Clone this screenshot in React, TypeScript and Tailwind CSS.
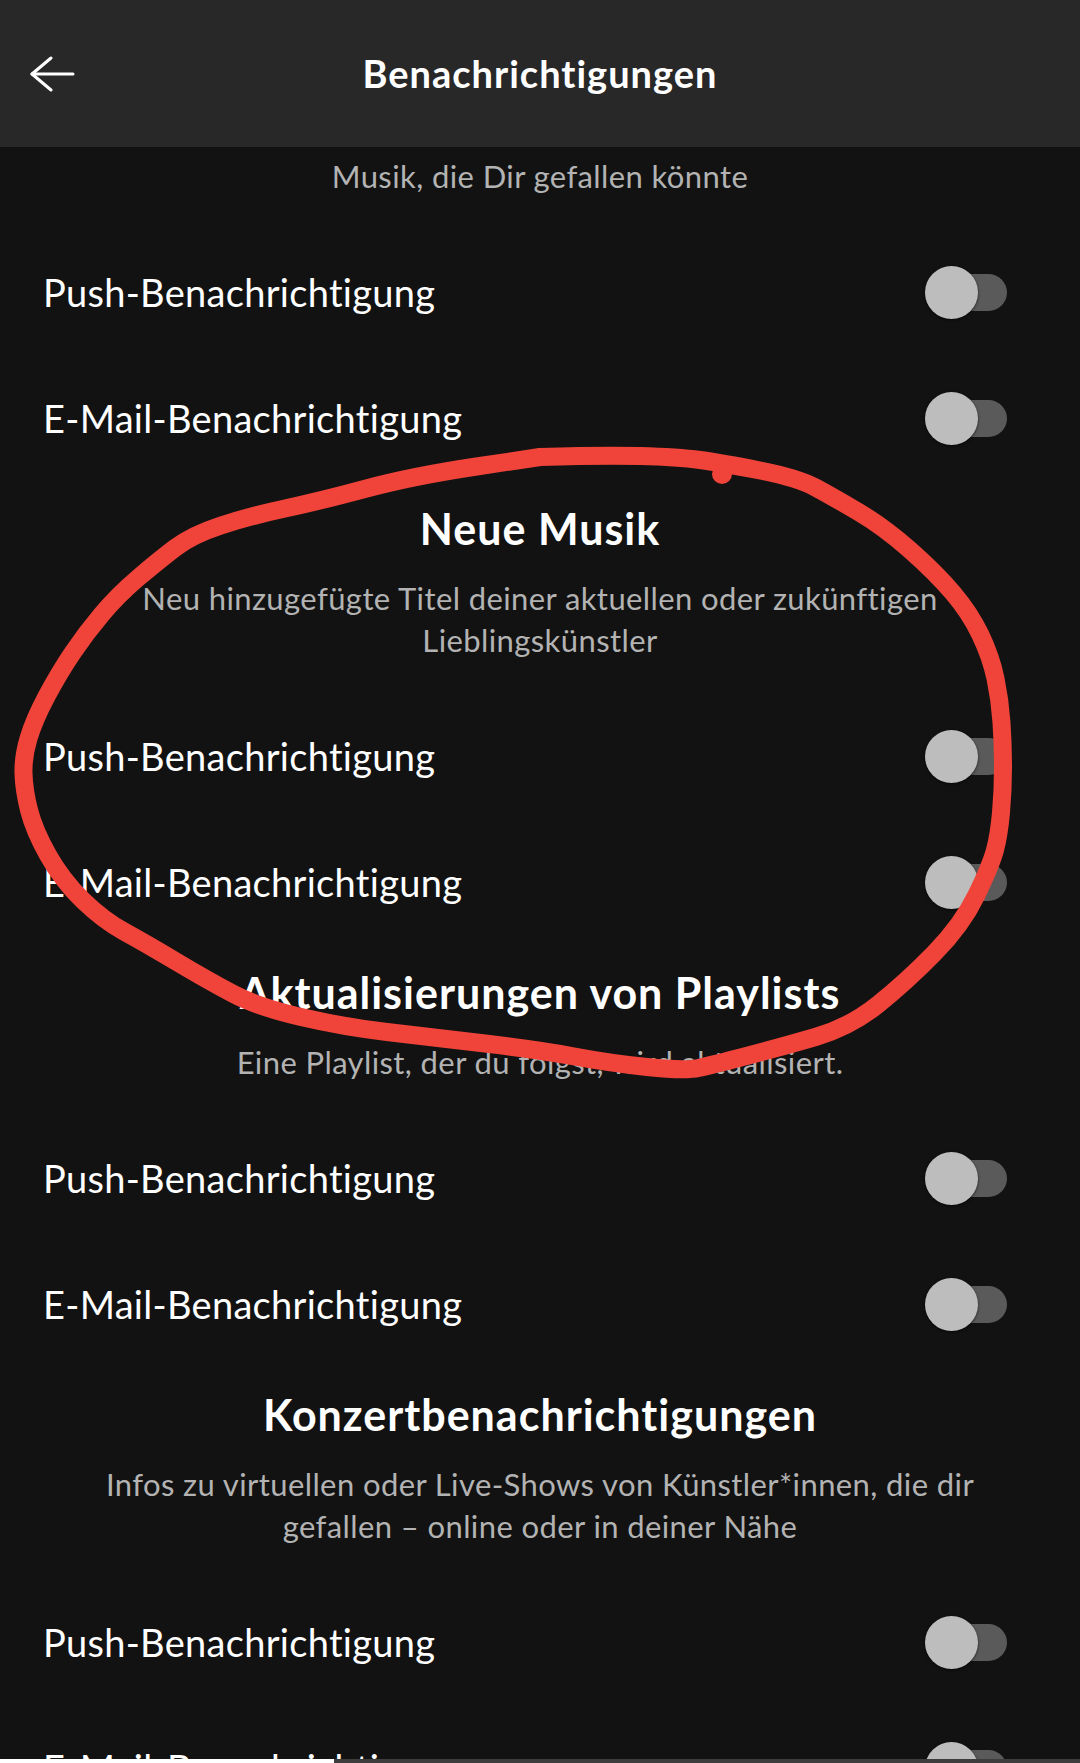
import React from "react";

const font = { fontFamily: "Lato, 'Noto Sans', sans-serif" };

type Section = { title?: string; desc: string[] };

const sections: Section[] = [
  { desc: ["Musik, die Dir gefallen könnte"] },
  {
    title: "Neue Musik",
    desc: ["Neu hinzugefügte Titel deiner aktuellen oder zukünftigen", "Lieblingskünstler"],
  },
  {
    title: "Aktualisierungen von Playlists",
    desc: ["Eine Playlist, der du folgst, wird aktualisiert."],
  },
  {
    title: "Konzertbenachrichtigungen",
    desc: [
      "Infos zu virtuellen oder Live-Shows von Künstler*innen, die dir",
      "gefallen – online oder in deiner Nähe",
    ],
  },
];

// hand-drawn red loop, in page pixels
const loop: [number, number][] = [
  [540, 457], [602, 455], [678, 457], [722, 463], [798, 478], [833, 497], [884, 527],
  [936, 573], [970, 613], [991, 657], [1000, 700], [1003, 745], [1003, 790], [999, 835],
  [991, 865], [962, 925], [906, 982], [850, 1027], [781, 1047], [712, 1065], [685, 1071],
  [609, 1063], [540, 1050], [430, 1037], [344, 1027], [258, 1007], [207, 980], [145, 943],
  [103, 920], [62, 880], [34, 830], [24, 790], [23, 757], [34, 720], [59, 673], [86, 633],
  [118, 595], [158, 561], [192, 535], [250, 516], [320, 501], [413, 476], [540, 457],
];

function loopPath() {
  let d = `M ${loop[0][0]} ${loop[0][1]}`;
  for (let i = 1; i < loop.length - 1; i++) {
    const [x, y] = loop[i];
    const [nx, ny] = loop[i + 1];
    d += ` Q ${x} ${y} ${(x + nx) / 2} ${(y + ny) / 2}`;
  }
  const last = loop[loop.length - 1];
  d += ` L ${last[0]} ${last[1]}`;
  return d;
}

const Toggle = () => (
  <div className="relative w-[82px] h-[53px] shrink-0">
    <div className="absolute right-0 top-[8px] h-[37px] w-[70px] rounded-full bg-[#5a5a5a]" />
    <div className="absolute left-0 top-0 size-[53px] rounded-full bg-[#bdbdbd] shadow-[0_1px_3px_rgba(0,0,0,0.6)]" />
  </div>
);

const Row = ({ label }: { label: string }) => (
  <div className="h-[126px] flex items-center justify-between pl-[43px] pr-[73px]">
    <span className="text-[38px] tracking-[0.3px] leading-none text-white">{label}</span>
    <Toggle />
  </div>
);

const App = () => {
  return (
    <div style={font} className="relative w-[1080px] h-[1763px] overflow-hidden bg-[#121212]">
      {/* Header */}
      <header className="h-[147px] bg-[#282828] grid grid-cols-[1fr_auto_1fr] items-center">
        <div className="pl-[30px] flex items-center">
          <svg width="46" height="36" viewBox="0 0 46 36" fill="none" stroke="white" strokeWidth="3" strokeLinecap="round" strokeLinejoin="round">
            <path d="M2 18 H43" />
            <path d="M21 2 L2 18 L21 34" />
          </svg>
        </div>
        <h1 className="text-[38px] tracking-[1px] font-bold text-white leading-none pb-[2px]">Benachrichtigungen</h1>
        <div />
      </header>

      {/* Content */}
      <main className="flex flex-col">
        {sections.map((s, i) => (
          <section key={i} className={s.title ? "pt-[24px]" : "pt-[8px]"}>
            {s.title && (
              <h2 className="text-center text-[43px] tracking-[1px] leading-[48px] font-bold text-white">{s.title}</h2>
            )}
            <div className={`px-[50px] text-center text-[31px] tracking-[0.4px] leading-[42px] text-[#b3b3b3] ${s.title ? "mt-[24px]" : ""}`}>
              {s.desc.map((line) => (
                <p key={line} className="whitespace-nowrap">{line}</p>
              ))}
            </div>
            <div className="mt-[32px]">
              <Row label="Push-Benachrichtigung" />
              <Row label="E-Mail-Benachrichtigung" />
            </div>
          </section>
        ))}
      </main>

      {/* Hand-drawn annotation */}
      <svg className="absolute inset-0 pointer-events-none" width="1080" height="1763" viewBox="0 0 1080 1763">
        <path d={loopPath()} fill="none" stroke="#f0443a" strokeWidth="18" strokeLinecap="round" strokeLinejoin="round" />
        <circle cx="722" cy="474" r="10" fill="#f0443a" />
      </svg>

      {/* Bottom bar */}
      <div className="absolute bottom-0 left-0 right-0 h-[4px] flex">
        <div className="w-[334px] bg-white" />
        <div className="flex-1 bg-[#3d3d3d]" />
      </div>
    </div>
  );
};

export default App;
